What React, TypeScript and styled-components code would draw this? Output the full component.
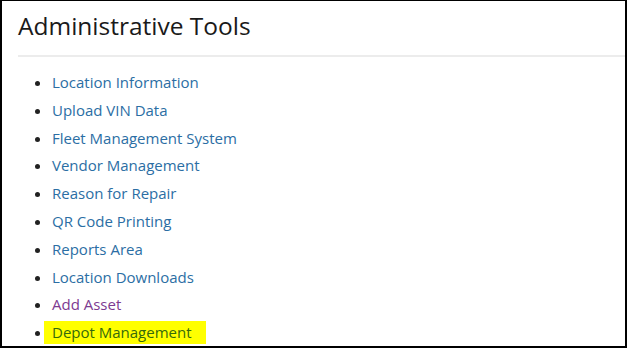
import styled, { createGlobalStyle } from "styled-components";

const GlobalStyle = createGlobalStyle`
  html, body {
    margin: 0;
    padding: 0;
    background: #ffffff;
  }
  body {
    font-family: "Open Sans", "Liberation Sans", sans-serif;
  }
`;

const Frame = styled.div`
  box-sizing: border-box;
  width: 627px;
  height: 348px;
  border: 2px solid #000;
  border-top-width: 1px;
  overflow: hidden;
  padding: 0 0 0 16px;
`;

const Title = styled.h1`
  margin: 0;
  padding: 10px 0 14px 0;
  font-size: 24.5px;
  font-weight: 400;
  color: #1a1a1a;
  line-height: 30px;
  border-bottom: 2px solid #ececec;
`;

const List = styled.ul`
  margin: 12px 0 0 0;
  padding: 0 0 0 34px;
  list-style: disc;
  color: #222;
`;

const Item = styled.li`
  height: 27.8px;
  line-height: 27.8px;
  font-size: 15px;
`;

type LinkProps = { $visited?: boolean; $marked?: boolean };

const Link = styled.a<LinkProps>`
  text-decoration: none;
  color: ${({ $visited, $marked }) =>
    $marked ? "#356a0c" : $visited ? "#7d3a91" : "#2b6ea4"};
  background: ${({ $marked }) => ($marked ? "#ffff00" : "transparent")};
  padding: ${({ $marked }) => ($marked ? "1px 14px 2px 8px" : "0")};
  margin-left: ${({ $marked }) => ($marked ? "-8px" : "0")};
`;

const tools = [
  { label: "Location Information" },
  { label: "Upload VIN Data" },
  { label: "Fleet Management System" },
  { label: "Vendor Management" },
  { label: "Reason for Repair" },
  { label: "QR Code Printing" },
  { label: "Reports Area" },
  { label: "Location Downloads" },
  { label: "Add Asset", visited: true },
  { label: "Depot Management", marked: true },
];

export default function App() {
  return (
    <>
      <GlobalStyle />
      <Frame>
        <Title>Administrative Tools</Title>
        <List>
          {tools.map((tool) => (
            <Item key={tool.label}>
              <Link href="#" $visited={tool.visited} $marked={tool.marked}>
                {tool.label}
              </Link>
            </Item>
          ))}
        </List>
      </Frame>
    </>
  );
}
